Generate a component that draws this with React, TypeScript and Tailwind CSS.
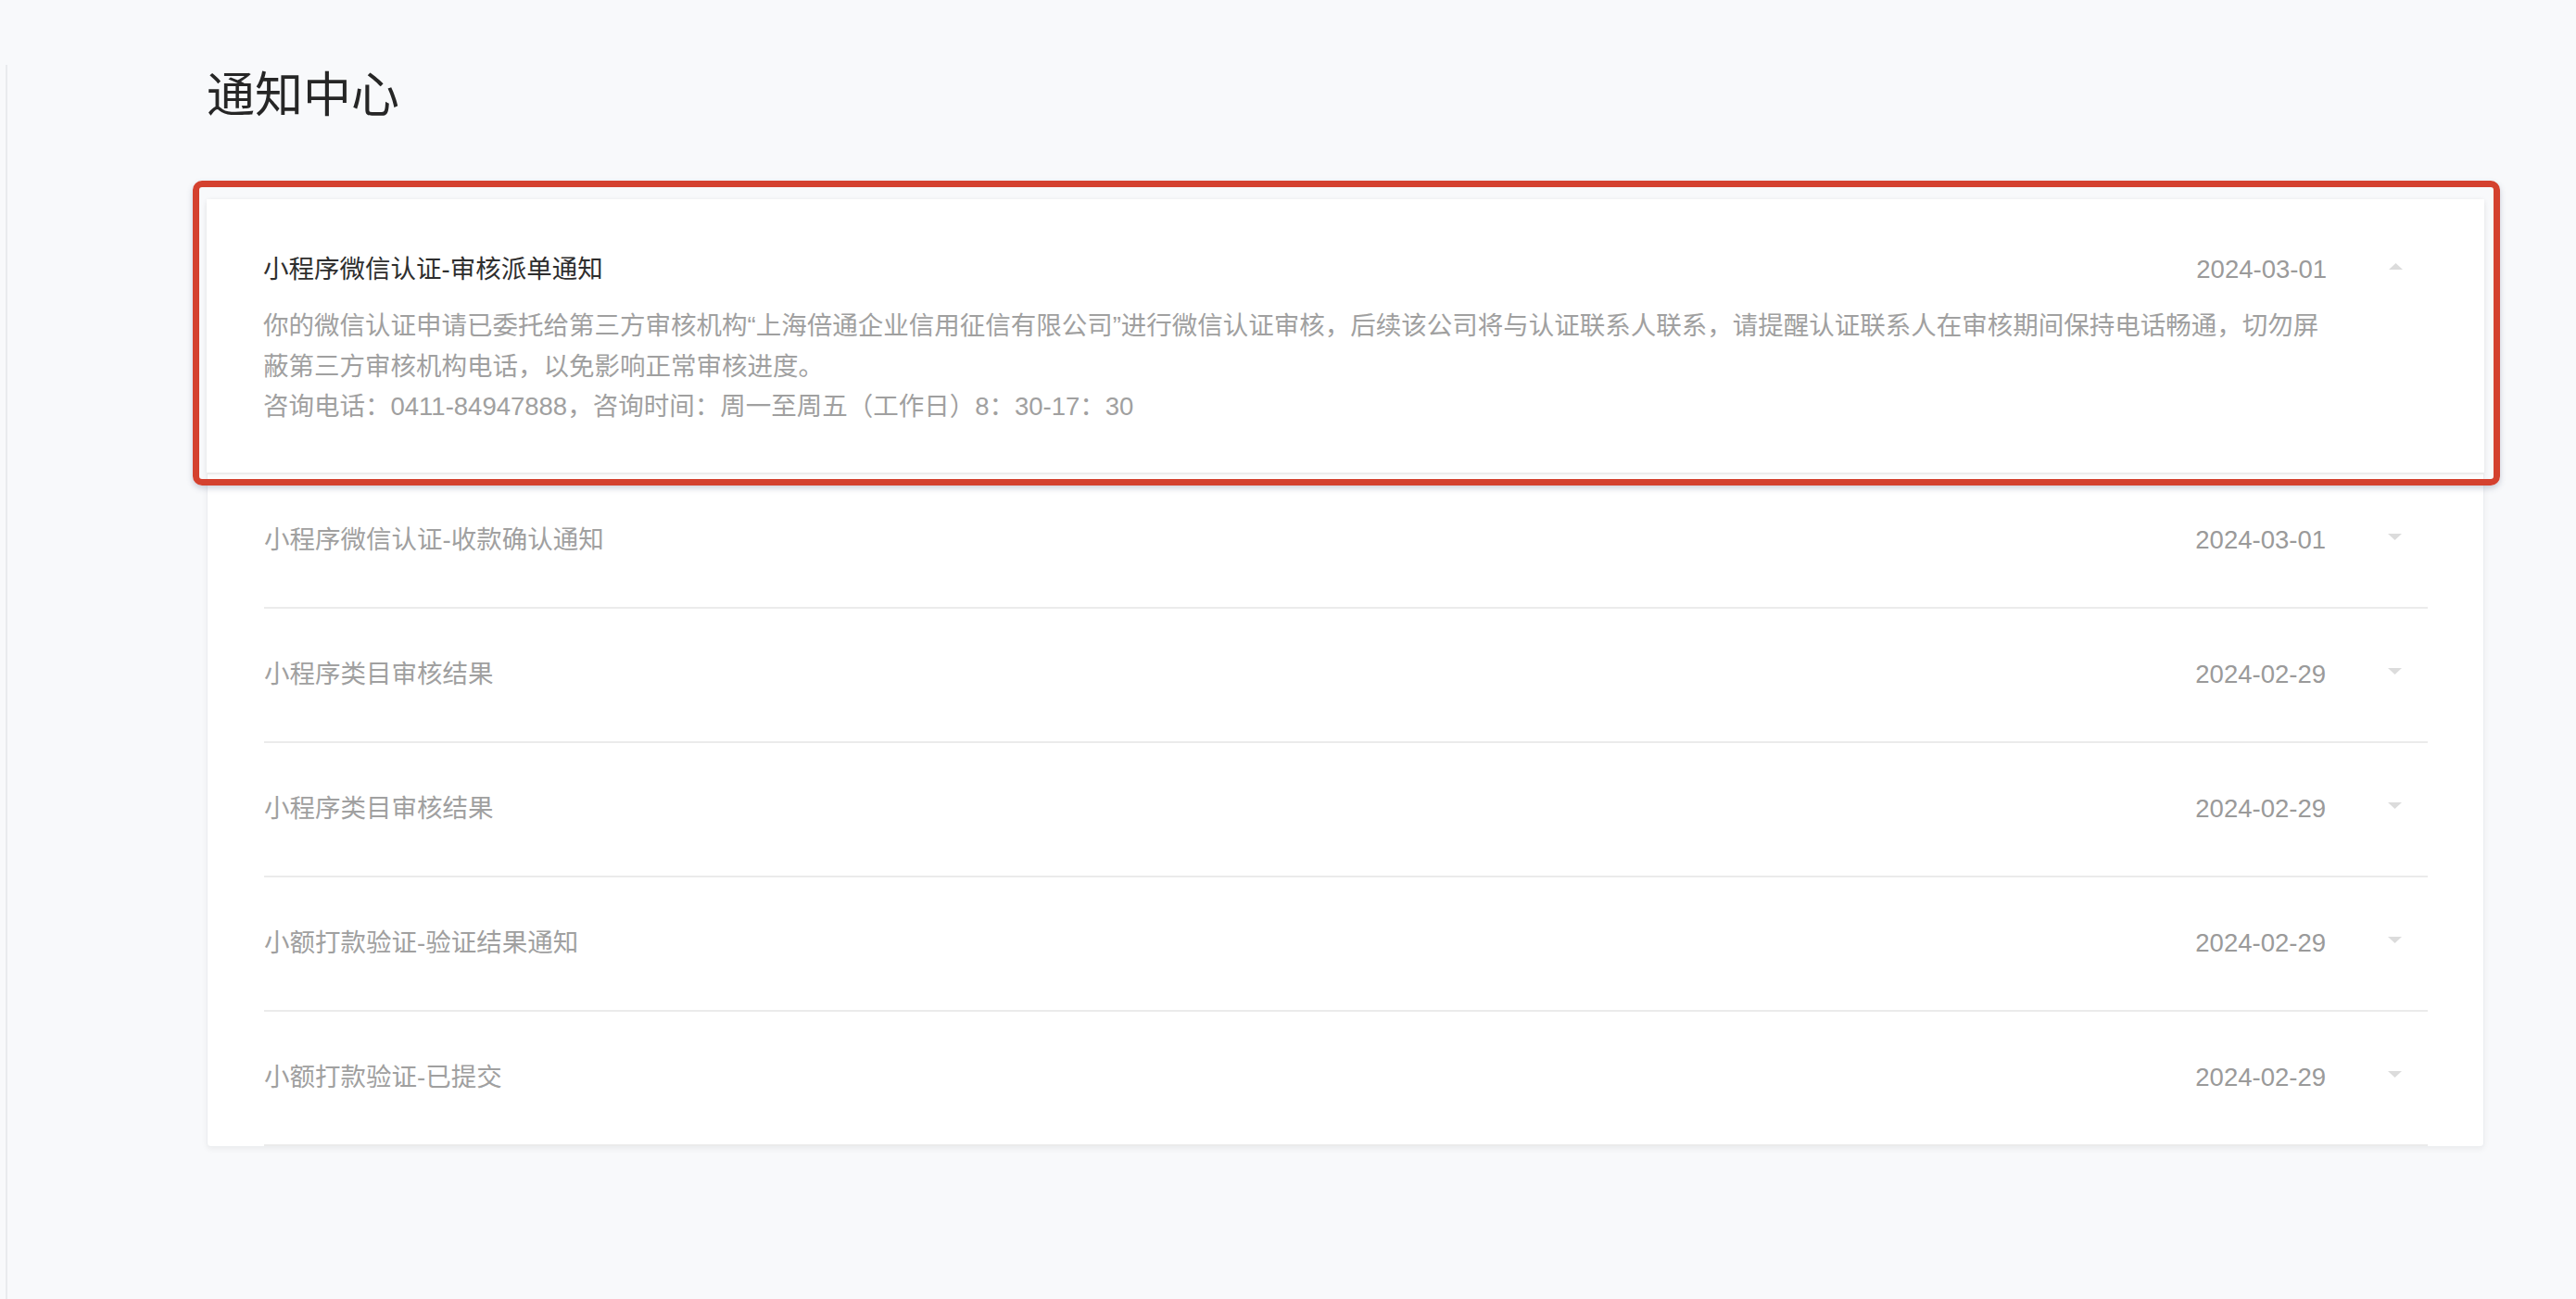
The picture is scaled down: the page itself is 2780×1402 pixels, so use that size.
const notices = [
  { title: "小程序微信认证-收款确认通知", date: "2024-03-01" },
  { title: "小程序类目审核结果", date: "2024-02-29" },
  { title: "小程序类目审核结果", date: "2024-02-29" },
  { title: "小额打款验证-验证结果通知", date: "2024-02-29" },
  { title: "小额打款验证-已提交", date: "2024-02-29" },
];

function Caret({ up }: { up?: boolean }) {
  return (
    <svg width="15" height="7" viewBox="0 0 15 7" className="block">
      {up ? <polygon points="0,7 7.5,0 15,7" fill="#dcdcdc" /> : <polygon points="0,0 15,0 7.5,7" fill="#dcdcdc" />}
    </svg>
  );
}

export default function App() {
  const font = { fontFamily: '"Liberation Sans", "Noto Sans CJK SC", sans-serif' };
  return (
    <div className="flex min-h-screen bg-[#f8f9fb]" style={font}>
      <div className="ml-[6px] mt-[70px] w-0 border-l-2 border-[#e9ebee]" />
      <main className="flex-1 pl-[215px] pr-[99px]">
        <h1 className="pt-[67px] text-[52px] leading-[72px] font-normal text-[#262626]">通知中心</h1>

        <div className="mt-[76px] rounded-[4px] border border-[#eceef1] bg-white shadow-[0_2px_6px_rgba(0,0,0,0.06)]">
          {/* expanded item */}
          <div className="relative -mx-px -mt-px border-b-2 border-[#ececec] bg-white shadow-[0_1px_6px_rgba(0,0,0,0.05)]">
            <div className="flex pl-[61px] pr-[60px] pt-[56px] pb-[49px]">
              <div className="flex-1">
                <div className="flex items-center justify-between text-[27.5px] leading-[40px]">
                  <span className="text-[#2e2e2e]">小程序微信认证-审核派单通知</span>
                  <span className="text-[#9a9a9a]">2024-03-01</span>
                </div>
                <div className="mt-[19px] text-[27.5px] leading-[43.5px] text-[#a0a0a0]">
                  <p>
                    你的微信认证申请已委托给第三方审核机构“上海倍通企业信用征信有限公司”进行微信认证审核，后续该公司将与认证联系人联系，请提醒认证联系人在审核期间保持电话畅通，切勿屏蔽第三方审核机构电话，以免影响正常审核进度。
                  </p>
                  <p>咨询电话：0411-84947888，咨询时间：周一至周五（工作日）8：30-17：30</p>
                </div>
              </div>
              <div className="flex h-[40px] w-[110px] items-center pl-[67px] pb-[8px]">
                <Caret up />
              </div>
            </div>
            <div className="pointer-events-none absolute -left-[15px] -right-[17px] -top-[20px] -bottom-[14px] rounded-[10px] border-[7px] border-[#d4412f] shadow-[0_3px_6px_rgba(60,70,110,0.25)]" />
          </div>

          {/* collapsed items */}
          {notices.map((n, i) => (
            <div key={i} className="pl-[61px] pr-[60px]">
              <div className="flex h-[145px] items-center border-b-2 border-[#ebebeb]">
                <div className="flex flex-1 items-center justify-between text-[27.5px] leading-[40px] text-[#a0a0a0]">
                  <span>{n.title}</span>
                  <span className="text-[#9a9a9a]">{n.date}</span>
                </div>
                <div className="flex h-[40px] w-[110px] items-center pl-[67px] pb-[8px]">
                  <Caret />
                </div>
              </div>
            </div>
          ))}
        </div>
      </main>
    </div>
  );
}
